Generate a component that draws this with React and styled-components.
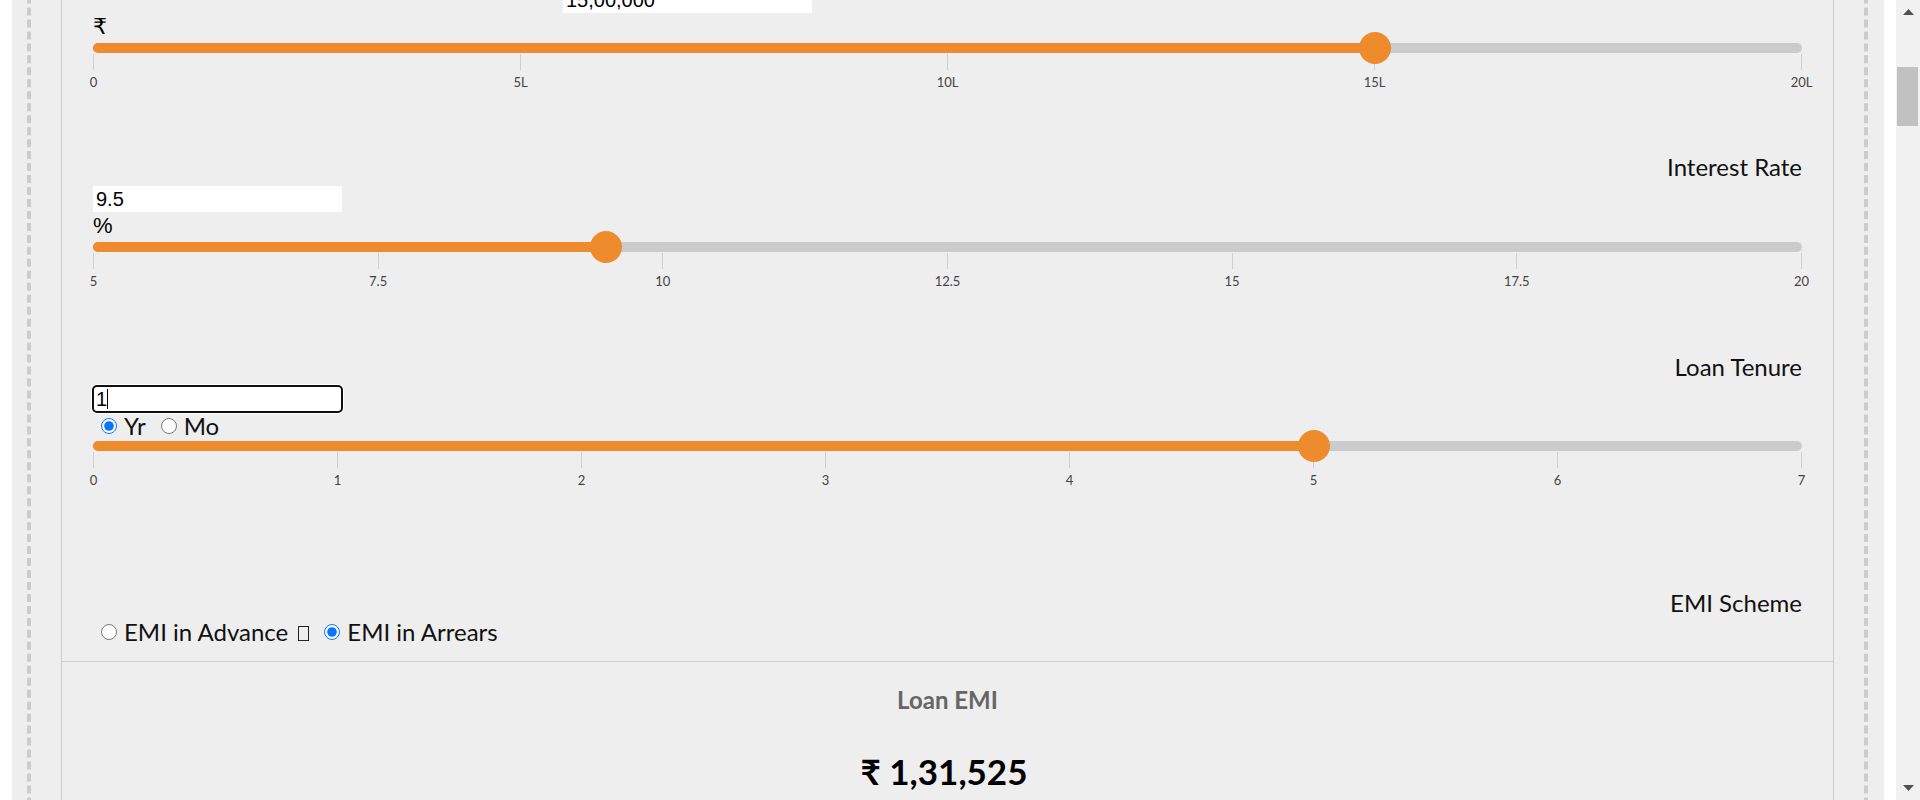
import React, { useLayoutEffect, useRef, useState } from "react";
import styled, { createGlobalStyle } from "styled-components";

const GlobalStyle = createGlobalStyle`
  html, body {
    margin: 0;
    padding: 0;
    background: #fff;
    overflow: hidden;
  }
  body {
    font-family: Lato, "Noto Sans", sans-serif;
  }
`;

const Screen = styled.div`
  display: flex;
  width: 1920px;
  height: 800px;
  overflow: hidden;
`;

const Viewport = styled.div`
  flex: 1;
  height: 100%;
  overflow: hidden;
  background: #fff;
`;

const Page = styled.div`
  margin: 12px 12px 0;
  padding: 0 16px 0 15px;
  background: #eee;
`;

const Frame = styled.div`
  border-left: 4px dashed #ccc;
  border-right: 4px dashed #ccc;
  padding: 30px 30px 60px;
`;

const Panel = styled.section`
  border: 1px solid #ccc;
  background: #eee;
`;

const PanelTitle = styled.h2`
  margin: 0;
  padding: 24px 31px;
  font: 700 26px/32px Lato, sans-serif;
  color: #333;
  border-bottom: 1px solid #ccc;
`;

const Form = styled.div`
  padding: 40px 31px 16px;
`;

const Field = styled.div`
  margin-bottom: ${(p) => p.$gap || 0}px;
`;

const FieldLabel = styled.div`
  padding-bottom: 2px;
  font: 24px/24px Lato, sans-serif;
  color: #111;
  text-align: right;
`;

const InputWrap = styled.div`
  position: relative;
  width: 249px;
  margin: 5px 0 0 ${(p) => p.$offset || 0}px;
`;

const NumberInput = styled.input`
  display: block;
  box-sizing: border-box;
  width: 249px;
  height: 26px;
  margin: 0;
  padding: 0 3px;
  border: none;
  background: #fff;
  color: #000;
  font: 20px "Liberation Sans", Arial, sans-serif;
  border-radius: ${(p) => (p.$focused ? "4px" : "0")};
  outline: ${(p) => (p.$focused ? "2px solid #101010" : "none")};
  outline-offset: -1px;
  box-shadow: ${(p) => (p.$focused ? "0 0 0 2px #fff" : "none")};
`;

const Caret = styled.span`
  position: absolute;
  left: ${(p) => p.$left}px;
  top: 3px;
  width: 1px;
  height: 20px;
  background: #000;
`;

const Unit = styled.div`
  margin-top: 2px;
  font: 22px/24px "Liberation Sans", "DejaVu Sans", sans-serif;
  color: #000;
`;

const RadioRow = styled.div`
  display: flex;
  align-items: center;
  gap: 15px;
  height: 26px;
  margin-top: ${(p) => p.$mt ?? 3}px;
  padding-left: 8px;
  font: 24px/26px Lato, sans-serif;
  color: #111;
`;

const RadioOption = styled.label`
  display: inline-flex;
  align-items: center;
  gap: 7px;
`;

const Radio = styled.input.attrs({ type: "radio" })`
  width: 16px;
  height: 16px;
  margin: 0;
  accent-color: #0a75ff;
`;

const Tofu = styled.span`
  display: inline-block;
  box-sizing: border-box;
  width: 11px;
  height: 15px;
  margin: 5px 0 0 10px;
  border: 1px solid #222;
`;

const SliderWrap = styled.div`
  margin-top: ${(p) => p.$mt || 0}px;
`;

const Track = styled.div`
  position: relative;
  height: 10px;
  border-radius: 5px;
  background: #cbcbcb;
`;

const Fill = styled.div`
  height: 100%;
  border-radius: 5px;
  background: #ee8b2d;
`;

const Thumb = styled.div`
  position: absolute;
  top: 50%;
  width: 32px;
  height: 32px;
  border-radius: 50%;
  background: #ee8b2d;
  transform: translate(-50%, -50%);
`;

const Ticks = styled.div`
  display: flex;
  justify-content: space-between;
  margin-top: 1px;
`;

const Tick = styled.div`
  width: 1px;
  display: flex;
  flex-direction: column;
  align-items: center;
`;

const TickLine = styled.div`
  flex: none;
  width: 1px;
  height: 16px;
  background: #cfcfcf;
`;

const TickLabel = styled.div`
  margin-top: 5px;
  font: 13px/14px Lato, sans-serif;
  color: #444;
  white-space: nowrap;
`;

const Result = styled.div`
  border-top: 1px solid #ccc;
  padding: 23px 0 120px;
  text-align: center;
`;

const ResultTitle = styled.div`
  font: 700 24px/29px Lato, sans-serif;
  color: #666;
`;

const ResultValue = styled.div`
  margin-top: 36px;
  padding-right: 7px;
  font: 700 35px/42px Lato, "DejaVu Sans", sans-serif;
  color: #000;
`;

const Scrollbar = styled.div`
  flex: none;
  width: 24px;
  height: 100%;
  display: flex;
  flex-direction: column;
  background: #f1f1f1;
`;

const ScrollButton = styled.div`
  flex: none;
  height: 24px;
  display: flex;
  align-items: center;
  justify-content: center;
`;

const ScrollTrack = styled.div`
  flex: 1;
  position: relative;
`;

const ScrollThumb = styled.div`
  position: absolute;
  left: 1px;
  right: 2px;
  background: #c1c1c1;
`;

function Arrow({ down }) {
  return (
    <svg width="11" height="6" viewBox="0 0 11 6">
      <path d={down ? "M0 0 H11 L5.5 6 Z" : "M0 6 H11 L5.5 0 Z"} fill="#505050" />
    </svg>
  );
}

function Slider({ min, max, value, ticks, mt }) {
  const pct = ((value - min) / (max - min)) * 100;
  return (
    <SliderWrap $mt={mt}>
      <Track>
        <Fill style={{ width: `${pct}%` }} />
        <Thumb style={{ left: `${pct}%` }} />
      </Track>
      <Ticks>
        {ticks.map((t) => (
          <Tick key={t}>
            <TickLine />
            <TickLabel>{t}</TickLabel>
          </Tick>
        ))}
      </Ticks>
    </SliderWrap>
  );
}

export default function App() {
  const viewRef = useRef(null);
  const firstRef = useRef(null);
  const [tenureUnit, setTenureUnit] = useState("yr");
  const [scheme, setScheme] = useState("arrears");

  useLayoutEffect(() => {
    const v = viewRef.current;
    const f = firstRef.current;
    if (!v || !f) return;
    const top = f.getBoundingClientRect().top - v.getBoundingClientRect().top + v.scrollTop;
    v.scrollTop = top + 44;
  }, []);

  return (
    <>
      <GlobalStyle />
      <Screen>
        <Viewport ref={viewRef}>
          <Page>
            <Frame>
              <Panel>
                <PanelTitle>EMI Calculator</PanelTitle>
                <Form>
                  <Field ref={firstRef} $gap={66}>
                    <FieldLabel>Loan Amount</FieldLabel>
                    <InputWrap $offset={470}>
                      <NumberInput type="text" defaultValue="15,00,000" />
                    </InputWrap>
                    <Unit>₹</Unit>
                    <Slider
                      min={0}
                      max={20}
                      value={15}
                      mt={4}
                      ticks={["0", "5L", "10L", "15L", "20L"]}
                    />
                  </Field>

                  <Field $gap={67}>
                    <FieldLabel>Interest Rate</FieldLabel>
                    <InputWrap>
                      <NumberInput type="text" defaultValue="9.5" />
                    </InputWrap>
                    <Unit>%</Unit>
                    <Slider
                      min={5}
                      max={20}
                      value={9.5}
                      mt={4}
                      ticks={["5", "7.5", "10", "12.5", "15", "17.5", "20"]}
                    />
                  </Field>

                  <Field $gap={104}>
                    <FieldLabel>Loan Tenure</FieldLabel>
                    <InputWrap>
                      <NumberInput type="text" defaultValue="1" $focused />
                      <Caret $left={14} />
                    </InputWrap>
                    <RadioRow $mt={1}>
                      <RadioOption>
                        <Radio
                          name="tenure"
                          checked={tenureUnit === "yr"}
                          onChange={() => setTenureUnit("yr")}
                        />
                        Yr
                      </RadioOption>
                      <RadioOption>
                        <Radio
                          name="tenure"
                          checked={tenureUnit === "mo"}
                          onChange={() => setTenureUnit("mo")}
                        />
                        Mo
                      </RadioOption>
                    </RadioRow>
                    <Slider
                      min={0}
                      max={7}
                      value={5}
                      mt={2}
                      ticks={["0", "1", "2", "3", "4", "5", "6", "7"]}
                    />
                  </Field>

                  <Field>
                    <FieldLabel>EMI Scheme</FieldLabel>
                    <RadioRow $mt={2}>
                      <RadioOption>
                        <Radio
                          name="scheme"
                          checked={scheme === "advance"}
                          onChange={() => setScheme("advance")}
                        />
                        <span>
                          EMI in Advance
                          <Tofu />
                        </span>
                      </RadioOption>
                      <RadioOption>
                        <Radio
                          name="scheme"
                          checked={scheme === "arrears"}
                          onChange={() => setScheme("arrears")}
                        />
                        EMI in Arrears
                      </RadioOption>
                    </RadioRow>
                  </Field>
                </Form>

                <Result>
                  <ResultTitle>Loan EMI</ResultTitle>
                  <ResultValue>₹ 1,31,525</ResultValue>
                </Result>
              </Panel>
            </Frame>
          </Page>
        </Viewport>
        <Scrollbar>
          <ScrollButton>
            <Arrow />
          </ScrollButton>
          <ScrollTrack>
            <ScrollThumb style={{ top: 43, height: 59 }} />
          </ScrollTrack>
          <ScrollButton>
            <Arrow down />
          </ScrollButton>
        </Scrollbar>
      </Screen>
    </>
  );
}
